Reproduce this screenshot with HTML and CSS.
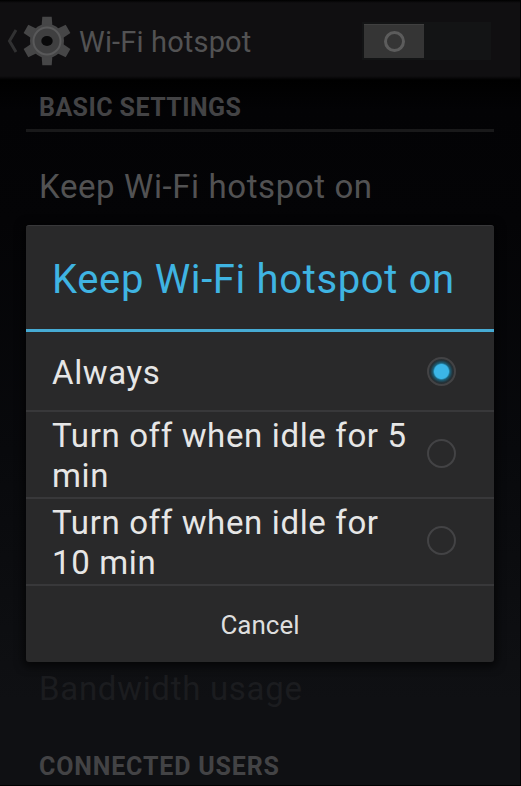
FILE: index.html
```html
<!DOCTYPE html>
<html lang="en">
<head>
<meta charset="utf-8">
<title>Wi-Fi hotspot</title>
<link rel="stylesheet" href="styles.css">
</head>
<body>
<div class="screen">
  <header class="bar">
    <svg class="back" width="12" height="26" viewBox="0 0 12 26"><path d="M10 2 3.5 13l6.5 11" fill="none" stroke="#313132" stroke-width="3"/></svg>
    <svg class="gear" width="50" height="52" viewBox="-25 -26 50 52">
      <g fill="#464647">
        <path id="tooth" d="M-5.5-14-4.7-24.3H4.7L5.5-14z"/>
        <use href="#tooth" transform="rotate(60)"/><use href="#tooth" transform="rotate(120)"/><use href="#tooth" transform="rotate(180)"/><use href="#tooth" transform="rotate(240)"/><use href="#tooth" transform="rotate(300)"/>
        <circle r="17"/>
      </g>
      <circle r="13.5" fill="#3f3f40" stroke="#59595a" stroke-width="2"/>
      <ellipse rx="5.7" ry="5" fill="#09090a"/>
    </svg>
    <h1 class="title">Wi-Fi hotspot</h1>
    <div class="switch"><div class="thumb"><span class="ring"></span></div></div>
  </header>
  <main class="settings">
    <h2 class="section basic">BASIC SETTINGS</h2>
    <div class="pref">Keep Wi-Fi hotspot on</div>
    <div class="pref faded">Bandwidth usage</div>
    <h2 class="section users">CONNECTED USERS</h2>
  </main>
  <div class="dialog" role="dialog">
    <h2 class="heading">Keep Wi-Fi hotspot on</h2>
    <div class="option first"><span class="label">Always</span><span class="radio on"></span></div>
    <div class="option"><span class="label">Turn off when idle for 5<br>min</span><span class="radio"></span></div>
    <div class="option"><span class="label">Turn off when idle for<br>10 min</span><span class="radio"></span></div>
    <div class="cancel">Cancel</div>
  </div>
</div>
</body>
</html>
```
FILE: styles.css
```css
* { box-sizing: border-box; }
body { margin: 0; font-family: Roboto, sans-serif; background: #000; }
h1, h2 { margin: 0; font-weight: 400; }
.screen {
  position: relative; width: 521px; height: 786px; overflow: hidden;
  background: linear-gradient(#000 80px, #030305 110px, #040406 220px, #08090c 450px, #0f1013 700px, #0f1013);
  border-right: 1px solid #000; border-bottom: 1px solid #000;
}
.bar {
  display: flex; align-items: center; height: 80px; padding: 2px 29px 0 6px;
  background: linear-gradient(#000 0, #100f11 3px, #100f11 76px, #000 80px);
}
.gear { margin-left: 4px; }
.title { margin-left: 7px; padding-top: 2px; font-size: 29px; line-height: 40px; letter-spacing: .16px; color: #525253; white-space: nowrap; }
.switch { margin-left: auto; width: 129px; height: 38px; padding: 2px; background: #131415; }
.thumb { display: flex; align-items: center; justify-content: center; width: 60px; height: 34px; background: #353535; border-top: 1px solid #404040; }
.ring { width: 21px; height: 21px; border: 3px solid #5c5c5c; border-radius: 50%; }
.settings { padding: 0 26px; }
.section { padding-left: 13px; font-size: 25px; font-weight: 700; line-height: 30px; color: #434345; white-space: nowrap; }
.basic { height: 52px; padding-top: 13px; letter-spacing: .43px; border-bottom: 3px solid #19191a; }
.pref { padding-left: 13px; margin-top: 35px; font-size: 33px; line-height: 40px; letter-spacing: .6px; color: #525253; white-space: nowrap; }
.faded { margin-top: 462px; letter-spacing: .7px; color: #1b1c1f; }
.users { margin-top: 43px; letter-spacing: .83px; }
.dialog {
  position: absolute; left: 26px; top: 225px; width: 468px; height: 437px;
  display: flex; flex-direction: column; background: #29292a;
  border-top: 1px solid #38383a; border-radius: 3px; box-shadow: 0 2px 8px 3px rgba(0,0,0,.6);
}
.heading { height: 106px; padding: 30px 0 0 26px; font-size: 40px; line-height: 48px; letter-spacing: .65px; color: #3fb4e2; border-bottom: 3px solid #46abd4; white-space: nowrap; }
.option { display: flex; align-items: center; justify-content: space-between; height: 87px; padding: 0 38px 0 26px; border-bottom: 2px solid #38383a; }
.option .radio { margin-bottom: 2px; }
.first { height: 80px; }
.label { padding-top: 2px; font-size: 33px; line-height: 40px; letter-spacing: .64px; color: #e6e6e6; white-space: nowrap; }
.first .label { padding-top: 4px; }
.radio { width: 29px; height: 29px; border: 2px solid #434345; border-radius: 50%; }
.option .on { margin-bottom: 0; background: radial-gradient(circle, #3bb6e8 0 7px, #1b6079 8.5px, #23343b 11px, #2b2c2e 13px); }
.cancel { padding-top: 23px; font-size: 26px; line-height: 32px; text-align: center; color: #dedede; }
```
